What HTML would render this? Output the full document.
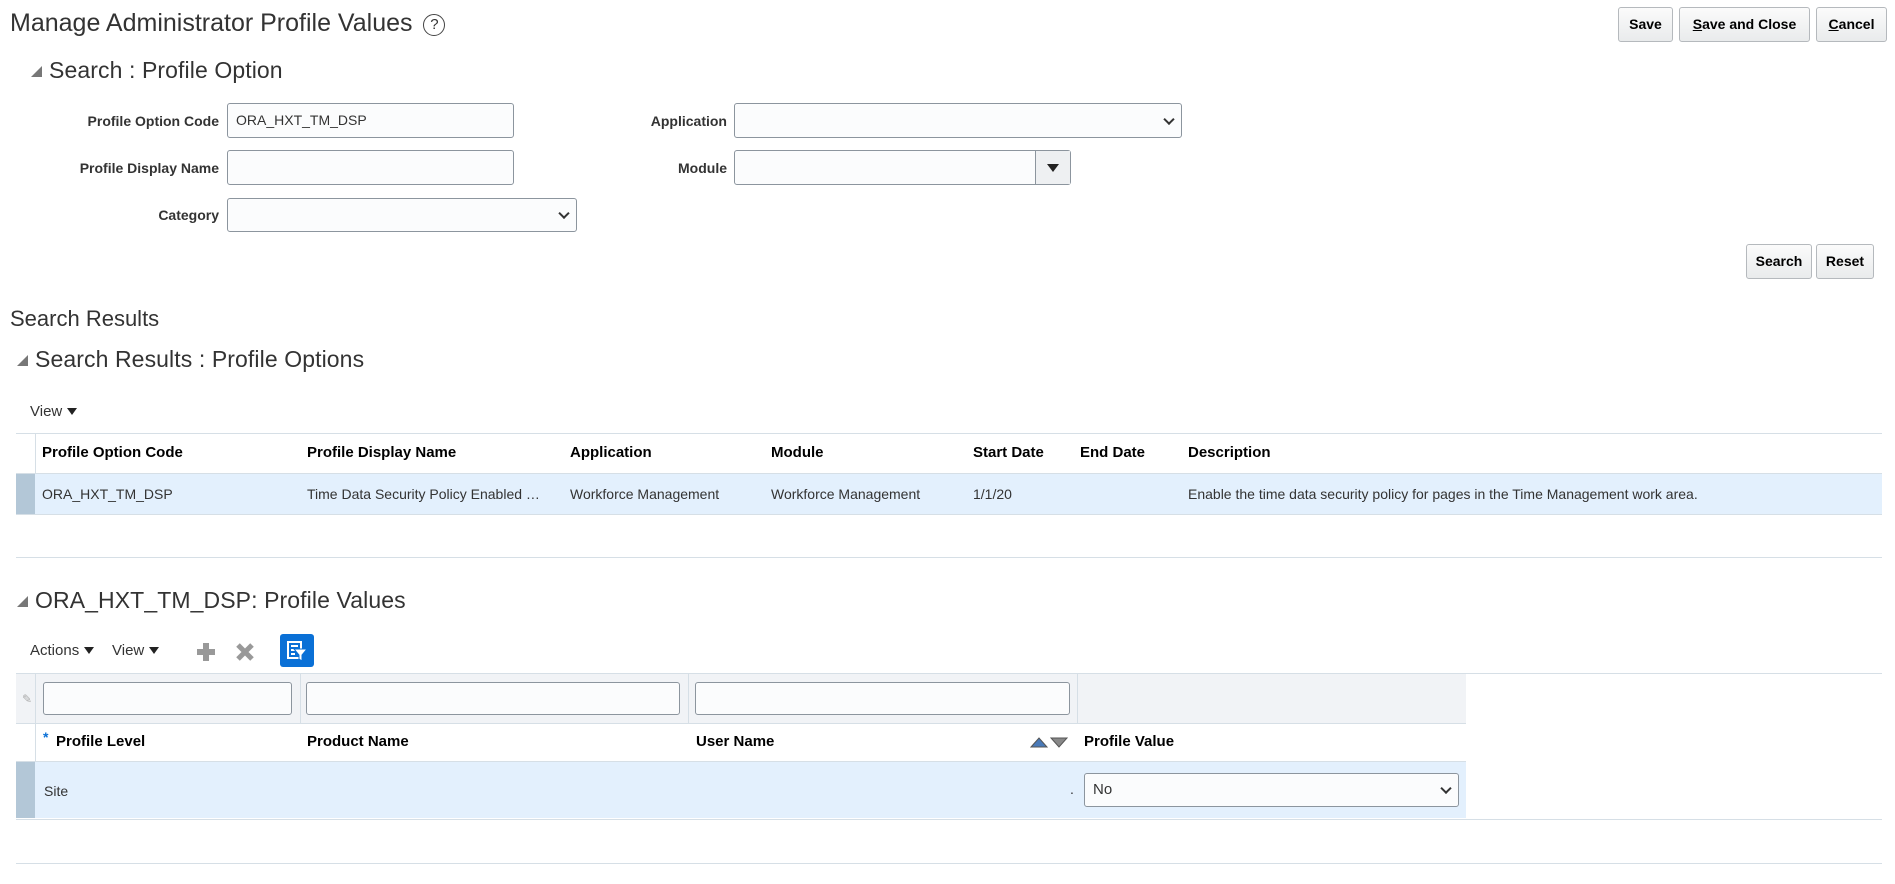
<!DOCTYPE html>
<html><head><meta charset="utf-8"><style>
*{box-sizing:border-box;margin:0;padding:0}
body{width:1895px;height:884px;background:#fff;font-family:"Liberation Sans",Arial,sans-serif;color:#333;position:relative;overflow:hidden}
.a{position:absolute;white-space:nowrap}
.btn{position:absolute;border:1px solid #b5b9bd;border-radius:3px;background:linear-gradient(#fbfbfb,#e9ebec);font-weight:bold;font-size:14px;color:#000;text-align:center;line-height:33px}
.inp{position:absolute;border:1px solid #8c959e;border-radius:3px;background:#fbfcfd;font-size:14px;color:#333;padding-left:8px}
.lbl{position:absolute;font-weight:bold;font-size:14px;color:#333;text-align:right;white-space:nowrap}
.h{position:absolute;font-size:23px;color:#333;white-space:nowrap;letter-spacing:0.1px}
.tri{display:inline-block;width:0;height:0;border-left:11px solid transparent;border-bottom:11px solid #777;margin-right:7px;vertical-align:1px}
.chev{position:absolute;right:8px;top:50%;width:8px;height:8px;border-right:2px solid #333;border-bottom:2px solid #333;transform:translateY(-70%) rotate(45deg)}
.th{position:absolute;font-weight:bold;font-size:15px;color:#000;white-space:nowrap}
.td{position:absolute;font-size:14px;color:#333;white-space:nowrap}
.hl{position:absolute;height:1px;background:#d6dfe6}
.dd{display:inline-block;width:0;height:0;border-left:5px solid transparent;border-right:5px solid transparent;border-top:7px solid #222;margin-left:5px;vertical-align:1px}
</style></head><body>

<div class="a" style="left:10px;top:9px;font-size:25px;color:#333">Manage Administrator Profile Values <span style="display:inline-block;width:22px;height:22px;border:1.5px solid #444;border-radius:50%;font-size:15px;text-align:center;line-height:19px;vertical-align:2px;margin-left:4px">?</span></div>

<div class="btn" style="left:1618px;top:7px;width:55px;height:35px">Save</div>
<div class="btn" style="left:1679px;top:7px;width:131px;height:35px"><u>S</u>ave and Close</div>
<div class="btn" style="left:1816px;top:7px;width:71px;height:35px"><u>C</u>ancel</div>

<div class="h" style="left:31px;top:57px"><span class="tri"></span>Search : Profile Option</div>

<div class="lbl" style="right:1676px;top:113px">Profile Option Code</div>
<div class="inp" style="left:227px;top:103px;width:287px;height:35px;line-height:33px">ORA_HXT_TM_DSP</div>
<div class="lbl" style="right:1676px;top:160px">Profile Display Name</div>
<div class="inp" style="left:227px;top:150px;width:287px;height:35px"></div>
<div class="lbl" style="right:1676px;top:207px">Category</div>
<div class="inp" style="left:227px;top:198px;width:350px;height:34px"><div class="chev"></div></div>

<div class="lbl" style="right:1168px;top:113px">Application</div>
<div class="inp" style="left:734px;top:103px;width:448px;height:35px"><div class="chev"></div></div>
<div class="lbl" style="right:1168px;top:160px">Module</div>
<div class="inp" style="left:734px;top:150px;width:337px;height:35px"><div style="position:absolute;right:0;top:0;width:35px;height:33px;border-left:1px solid #8c959e;background:#eef0f2"><div style="position:absolute;left:11px;top:13px;border-left:6px solid transparent;border-right:6px solid transparent;border-top:8px solid #222"></div></div></div>

<div class="btn" style="left:1746px;top:244px;width:66px;height:35px">Search</div>
<div class="btn" style="left:1816px;top:244px;width:58px;height:35px">Reset</div>

<div class="a" style="left:10px;top:306px;font-size:22px;color:#333">Search Results</div>
<div class="h" style="left:17px;top:346px"><span class="tri"></span>Search Results : Profile Options</div>
<div class="a" style="left:30px;top:403px;font-size:15px;color:#333">View<span class="dd"></span></div>

<div class="hl" style="left:16px;top:433px;width:1866px"></div>
<div class="a" style="left:16px;top:474px;width:1866px;height:40px;background:#e3f0fd"></div>
<div class="a" style="left:16px;top:474px;width:19px;height:40px;background:#b3c7d7"></div>
<div class="hl" style="left:16px;top:473px;width:1866px"></div>
<div class="hl" style="left:16px;top:514px;width:1866px"></div>
<div class="a" style="left:35px;top:433px;width:1px;height:40px;background:#d6dfe6"></div>
<div class="th" style="left:42px;top:444px">Profile Option Code</div>
<div class="th" style="left:307px;top:444px">Profile Display Name</div>
<div class="th" style="left:570px;top:444px">Application</div>
<div class="th" style="left:771px;top:444px">Module</div>
<div class="th" style="left:973px;top:444px">Start Date</div>
<div class="th" style="left:1080px;top:444px">End Date</div>
<div class="th" style="left:1188px;top:444px">Description</div>
<div class="td" style="left:42px;top:486px">ORA_HXT_TM_DSP</div>
<div class="td" style="left:307px;top:486px">Time Data Security Policy Enabled …</div>
<div class="td" style="left:570px;top:486px">Workforce Management</div>
<div class="td" style="left:771px;top:486px">Workforce Management</div>
<div class="td" style="left:973px;top:486px">1/1/20</div>
<div class="td" style="left:1188px;top:486px">Enable the time data security policy for pages in the Time Management work area.</div>

<div class="hl" style="left:16px;top:557px;width:1866px"></div>

<div class="h" style="left:17px;top:587px"><span class="tri"></span>ORA_HXT_TM_DSP: Profile Values</div>

<div class="a" style="left:30px;top:642px;font-size:15px;color:#333">Actions<span class="dd"></span></div>
<div class="a" style="left:112px;top:642px;font-size:15px;color:#333">View<span class="dd"></span></div>
<div class="a" style="left:197px;top:643px;width:18px;height:18px"><div style="position:absolute;left:6px;top:0;width:6px;height:18px;background:#999"></div><div style="position:absolute;left:0;top:6px;width:18px;height:6px;background:#999"></div></div>
<svg class="a" style="left:236px;top:643px" width="18" height="18"><path d="M2 2L16 16M16 2L2 16" stroke="#999" stroke-width="5"/></svg>
<div class="a" style="left:280px;top:634px;width:34px;height:33px;background:#0a70d6;border-radius:3px">
<svg width="34" height="33"><rect x="8" y="8" width="13" height="16" fill="none" stroke="#fff" stroke-width="2"/><path d="M11 12h7M11 16h7M11 20h4" stroke="#fff" stroke-width="2"/><path d="M14 15h13l-5 6v6l-3-2v-4z" fill="#fff" stroke="#0a70d6" stroke-width="1"/></svg></div>

<div class="hl" style="left:16px;top:673px;width:1866px"></div>
<div class="a" style="left:16px;top:674px;width:1450px;height:49px;background:#f1f3f6"></div>
<div class="a" style="left:22px;top:692px;font-size:12px;color:#aaa">✎</div>
<div class="inp" style="left:43px;top:682px;width:249px;height:33px"></div>
<div class="inp" style="left:306px;top:682px;width:374px;height:33px"></div>
<div class="inp" style="left:695px;top:682px;width:375px;height:33px"></div>
<div class="a" style="left:35px;top:674px;width:1px;height:88px;background:#d6dfe6"></div>
<div class="a" style="left:300px;top:674px;width:1px;height:49px;background:#d6dfe6"></div>
<div class="a" style="left:688px;top:674px;width:1px;height:49px;background:#d6dfe6"></div>
<div class="a" style="left:1077px;top:674px;width:1px;height:49px;background:#d6dfe6"></div>
<div class="hl" style="left:16px;top:723px;width:1450px"></div>
<div class="a" style="left:43px;top:729px;color:#0a70d6;font-size:14px;font-weight:bold">*</div>
<div class="th" style="left:56px;top:733px">Profile Level</div>
<div class="th" style="left:307px;top:733px">Product Name</div>
<div class="th" style="left:696px;top:733px">User Name</div>
<svg class="a" style="left:1030px;top:735px" width="40" height="14"><path d="M1 12L9 3L17 12Z" fill="#4a7ab8" stroke="#555"/><path d="M21 3L37 3L29 12Z" fill="#888" stroke="#555"/></svg>
<div class="th" style="left:1084px;top:733px">Profile Value</div>
<div class="hl" style="left:16px;top:761px;width:1450px"></div>
<div class="a" style="left:16px;top:762px;width:1450px;height:56px;background:#e3f0fd"></div>
<div class="a" style="left:16px;top:762px;width:19px;height:56px;background:#b3c7d7"></div>
<div class="td" style="left:44px;top:783px">Site</div>
<div class="td" style="left:1070px;top:781px">.</div>
<div class="inp" style="left:1084px;top:773px;width:375px;height:34px;line-height:32px;font-size:15px">No<div class="chev"></div></div>
<div class="hl" style="left:16px;top:819px;width:1866px"></div>

<div class="hl" style="left:16px;top:863px;width:1866px"></div>
</body></html>
